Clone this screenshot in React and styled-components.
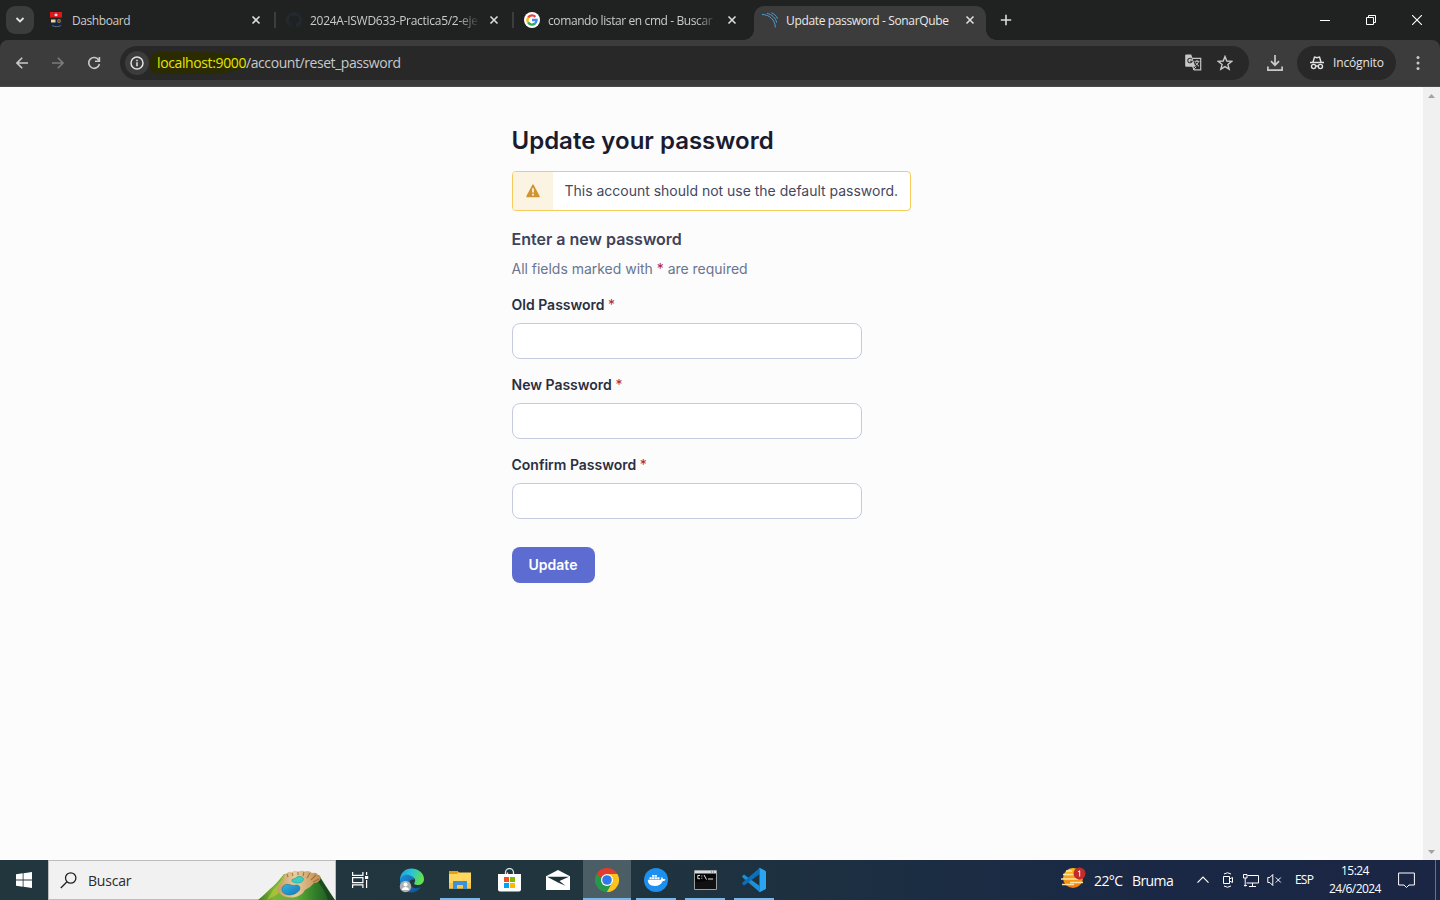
import React from 'react';
import styled, { createGlobalStyle } from 'styled-components';

const Global = createGlobalStyle`
  *, *::before, *::after { box-sizing: border-box; }
  body { margin: 0; overflow: hidden; background: #fcfcfd; }
  svg { display: block; flex: none; }
`;

const ui = `'Segoe UI', 'Open Sans', 'Noto Sans', sans-serif`;

const Screen = styled.div`
  width: 1440px;
  height: 900px;
  display: flex;
  flex-direction: column;
  overflow: hidden;
  font-family: ${ui};
`;

/* ---------- browser chrome ---------- */
const TabStrip = styled.div`
  height: 40px;
  flex: none;
  display: flex;
  background: #1f2221;
  padding-left: 6px;
`;
const TabSearch = styled.div`
  width: 28px;
  height: 28px;
  margin: 6px 6px 0 0;
  border-radius: 9px;
  background: #3b3c3c;
  display: grid;
  place-items: center;
`;
const Tab = styled.div`
  position: relative;
  width: 232px;
  height: 34px;
  margin: 6px 6px 0 0;
  padding: 0 8px 6px;
  display: flex;
  align-items: center;
  gap: 8px;
  color: ${(p) => (p.$active ? '#e9e9e9' : '#c9cbca')};
  background: ${(p) => (p.$active ? '#3c3c3c' : 'transparent')};
  border-radius: 10px 10px 0 0;
  &::before, &::after {
    content: '';
    display: ${(p) => (p.$active ? 'block' : 'none')};
    position: absolute;
    bottom: 0;
    width: 10px;
    height: 10px;
  }
  &::before { left: -10px; background: radial-gradient(circle at 0 0, transparent 9.5px, #3c3c3c 10px); }
  &::after { right: -10px; background: radial-gradient(circle at 100% 0, transparent 9.5px, #3c3c3c 10px); }
`;
const TabTitle = styled.div`
  width: 168px;
  flex: none;
  height: 20px;
  margin-top: 2px;
  line-height: 20px;
  font-size: 12px;
  letter-spacing: ${(p) => p.$track || 0}px;
  white-space: nowrap;
  overflow: hidden;
  mask-image: ${(p) => (p.$fade ? 'linear-gradient(90deg, #000 148px, transparent 170px)' : 'none')};
`;
const TabClose = styled.div`
  width: 16px;
  height: 16px;
  display: grid;
  place-items: center;
`;
const TabDivider = styled.span`
  position: absolute;
  right: -4px;
  top: 6px;
  width: 2px;
  height: 16px;
  background: #3c3d3d;
`;
const NewTab = styled.div`
  width: 28px;
  height: 28px;
  margin: 6px 0 0;
  display: grid;
  place-items: center;
`;
const WindowButtons = styled.div`
  margin-left: auto;
  display: flex;
`;
const WindowButton = styled.div`
  width: 46px;
  height: 40px;
  display: grid;
  place-items: center;
`;
const ToolbarBack = styled.div`
  flex: none;
  background: #1f2221;
`;
const Toolbar = styled.div`
  height: 47px;
  display: flex;
  align-items: center;
  padding: 0 0 1px 4px;
  background: #3c3c3c;
  border-bottom: 1px solid #4a4a4a;
  border-radius: 8px 8px 0 0;
`;
const ToolButton = styled.div`
  width: ${(p) => p.$w || 36}px;
  height: 34px;
  display: grid;
  place-items: center;
`;
const AddressBar = styled.div`
  width: 1129px;
  height: 34px;
  margin: 0 4px 0 8px;
  padding: 0 8px 0 5px;
  display: flex;
  align-items: center;
  background: #282828;
  border-radius: 17px;
`;
const SiteInfo = styled.div`
  width: 24px;
  height: 24px;
  border-radius: 12px;
  background: #3c3c3c;
  display: grid;
  place-items: center;
`;
const Url = styled.div`
  display: flex;
  align-items: center;
  margin-right: auto;
  font-size: 14px;
  line-height: 22px;
  letter-spacing: -0.43px;
  color: #c7c9cc;
`;
const Marked = styled.span`
  padding-left: 7px;
  margin-left: 1px;
  letter-spacing: -0.38px;
  color: #e4e400;
  background: #2b2b02;
  border-radius: 10px 50% 40% 10px / 7px 10px 10px 7px;
`;
const Incognito = styled.div`
  width: 99px;
  height: 34px;
  padding-left: 12px;
  display: flex;
  align-items: center;
  gap: 8px;
  border-radius: 17px;
  background: #282828;
  color: #e3e3e3;
  font-size: 12px;
  letter-spacing: -0.15px;
`;

/* ---------- page ---------- */
const Viewport = styled.main`
  flex: 1;
  display: flex;
  background: #fcfcfd;
  font-family: Inter, sans-serif;
`;
const Page = styled.div`
  width: 1423px;
  padding: 38px 0 0 512px;
  display: flex;
  flex-direction: column;
  align-items: flex-start;
`;
const Title = styled.h1`
  margin: 0 0 0 -0.5px;
  font-size: 24px;
  line-height: 32px;
  font-weight: 600;
  color: #1a1b2e;
`;
const Banner = styled.div`
  width: 399px;
  height: 40px;
  margin-top: 14px;
  display: flex;
  border: 1px solid #f6ca5c;
  border-radius: 4px;
  background: #fff;
  overflow: hidden;
`;
const BannerIcon = styled.div`
  width: 40px;
  display: grid;
  place-items: center;
  background: #fcf4e2;
`;
const BannerText = styled.div`
  padding-left: 11.5px;
  font-size: 14px;
  line-height: 38px;
  letter-spacing: -0.01px;
  white-space: nowrap;
  color: #45475f;
`;
const Subtitle = styled.h2`
  margin: 16px 0 0 -0.5px;
  font-size: 16px;
  line-height: 24px;
  font-weight: 600;
  color: #3e4357;
`;
const Note = styled.p`
  margin: 8px 0 0 -0.5px;
  font-size: 14px;
  line-height: 20px;
  letter-spacing: -0.02px;
  color: #6a7590;
`;
const Star = styled.span`
  font-weight: 400;
  color: #b4233c;
`;
const Field = styled.label`
  margin-top: 16px;
  display: flex;
  flex-direction: column;
  gap: 8px;
  font-size: 14px;
  line-height: 20px;
  font-weight: 600;
  color: #2a2f40;
`;
const LabelText = styled.span`
  margin-left: -0.5px;
`;
const Input = styled.input`
  width: 350px;
  height: 36px;
  padding: 0 12px;
  border: 1px solid #c5cae0;
  border-radius: 8px;
  background: #fff;
  outline: none;
`;
const Submit = styled.button`
  width: 83px;
  height: 36px;
  margin-top: 28px;
  padding: 0 1px 0 0;
  border: 0;
  border-radius: 8px;
  background: #5d6cd0;
  color: #fff;
  font: 600 14px/20px Inter, sans-serif;
`;
const Scrollbar = styled.div`
  width: 17px;
  padding: 7px 0 6px;
  display: flex;
  flex-direction: column;
  justify-content: space-between;
  align-items: center;
  background: #f0f0f0;
`;

/* ---------- taskbar ---------- */
const Taskbar = styled.footer`
  height: 40px;
  flex: none;
  display: flex;
  color: #fff;
  background: linear-gradient(90deg, #21363d 0%, #20353e 40%, #1c2e42 62%, #1a2845 80%, #1a2644 100%);
`;
const TaskItem = styled.div`
  width: ${(p) => p.$w || 49}px;
  height: 40px;
  margin-right: ${(p) => p.$gap || 0}px;
  display: grid;
  place-items: center;
  background: ${(p) => (p.$active ? 'linear-gradient(90deg, #4b5d65 48px, transparent 48px)' : 'none')};
  padding-right: ${(p) => (p.$w ? 0 : 1)}px;
  grid-template-rows: 38px 2px;
  &::after {
    content: '';
    width: ${(p) => (p.$active ? 48 : 40)}px;
    height: 2px;
    background: ${(p) => (p.$open ? '#76b9ed' : 'transparent')};
  }
  svg { margin-top: 2px; }
`;
const Search = styled.div`
  width: 288px;
  height: 40px;
  padding-left: 11px;
  display: flex;
  align-items: center;
  background: #f1f1f1;
  border: 1px solid #bcbcbc;
  color: #2b2b2b;
  font-size: 14px;
  letter-spacing: -0.2px;
  span { margin: 0 auto 0 11px; }
`;
const Weather = styled.div`
  margin-left: auto;
  display: flex;
  align-items: center;
  font-size: 14px;
  svg { margin-top: -4px; }
`;
const WeatherText = styled.span`
  width: ${(p) => p.$w}px;
  margin-left: 8px;
  letter-spacing: -0.6px;
  white-space: nowrap;
`;
const Tray = styled.div`
  display: flex;
  align-items: center;
  margin-left: 24px;
  width: 243px;
  font-size: 12px;
`;
const Lang = styled.span`
  margin: -1px 0 0 12px;
  width: 20px;
  letter-spacing: -0.8px;
`;
const Clock = styled.div`
  width: 60px;
  margin-left: 10px;
  text-align: center;
  line-height: 18px;
  letter-spacing: -0.55px;
  white-space: nowrap;
  padding-bottom: 1px;
`;
const Peek = styled.div`
  width: 5px;
  height: 40px;
  margin-left: auto;
  border-left: 1px solid #66718a;
`;

/* ---------- icons ---------- */
const Line = ({ w, h = w, d, c = '#dcdcdc', s = 1.6, children }) => (
  <svg width={w} height={h} viewBox={`0 0 ${w} ${h}`} fill="none" stroke={c} strokeWidth={s}>
    {d && <path d={d} />}
    {children}
  </svg>
);
const TrayIcon = styled.svg`
  margin-left: ${(p) => p.$gap}px;
  fill: none;
  stroke: #fff;
`;
const Close = () => <Line w={10} d="M1.500 1.500l7 7M8.500 1.500l-7 7" s={1.600} />;

const Crest = () => (
  <svg width="16" height="16" viewBox="0 0 16 16">
    <path d="M3 7h11v5c0 3-3 4-5.500 4S3 15 3 12z" fill="#10264b" />
    <path d="M2 0h12v5.500H2z" fill="#df171d" />
    <path d="M8 1.300l2 1.600-2 1.700-2-1.700z" fill="#b8e4f2" />
    <path d="M3 7.500h4.500v3H3z" fill="#f0d694" />
    <circle cx="11" cy="9" r="1.900" fill="#b87937" /><circle cx="11" cy="9" r=".8" fill="#10264b" />
    <path d="M4 13.500c2 1.500 7 1.500 9 0" stroke="#5c6c64" fill="none" />
  </svg>
);
const GitHub = () => (
  <svg width="16" height="16" viewBox="0 0 16 16">
    <path fill="#24292f" d="M8 0C3.580 0 0 3.580 0 8c0 3.540 2.290 6.530 5.470 7.590.4.070.55-.17.55-.38v-1.490c-2.010.37-2.530-.49-2.690-.94-.09-.23-.48-.94-.82-1.130-.28-.15-.68-.52-.01-.53.63-.01 1.080.58 1.230.82.72 1.210 1.870.87 2.330.66.07-.52.28-.87.51-1.070-1.780-.2-3.640-.89-3.640-3.950 0-.87.31-1.590.82-2.150-.08-.2-.36-1.020.08-2.120 0 0 .67-.21 2.200.82a7.600 7.600 0 014 0c1.530-1.040 2.200-.82 2.200-.82.44 1.100.16 1.920.08 2.120.51.56.82 1.270.82 2.150 0 3.070-1.870 3.750-3.650 3.950.29.25.54.73.54 1.480v2.200c0 .21.15.46.55.38A8 8 0 0016 8c0-4.420-3.580-8-8-8z" />
  </svg>
);
const Google = () => (
  <svg width="16" height="16" viewBox="0 0 16 16">
    <circle cx="8" cy="8" r="8" fill="#fff" />
    <g fill="none" strokeWidth="2.300">
      <path d="M4.200 5.500A4.600 4.600 0 0111.400 4.900" stroke="#ea4335" />
      <path d="M4.200 10.500a4.600 4.600 0 010-5" stroke="#fbbc05" />
      <path d="M11 11.500a4.600 4.600 0 01-6.800-1" stroke="#34a853" />
      <path d="M8 8h4.600c0 1.600-.6 2.700-1.600 3.500" stroke="#4285f4" />
    </g>
  </svg>
);
const Sonar = () => (
  <Line w={16} c="#4b9fd5" s={1}>
    <path d="M0 2.500C7.500 2.500 13.300 8 13.300 15.500" />
    <path d="M5 1.300C10 2.500 13.600 6 14.700 10.600" />
    <path d="M9.500.8C12.400 2 14.500 4 15.600 6.800" />
  </Line>
);
const Translate = () => (
  <svg width="17" height="17" viewBox="0 0 17 17">
    <path d="M7 4.300h8.700v11.600H9.200L7.500 12" fill="none" stroke="#c4c4c4" strokeWidth="1.200" />
    <path d="M1.200.5h5l4.300 12.300H1.200Q.2 12.800.2 11.800V1.500Q.2.500 1.200.5z" fill="#c7c7c7" />
    <path d="M7 5.300A2.300 2.300 0 107.200 7.300H5" fill="none" stroke="#333" strokeWidth="1.100" />
    <path d="M9.500 7.300h5M12 6v1.300M13.500 7.500c-.5 2-1.800 3.200-3 4M10.500 8.500c.8 1.500 2 2.700 3.500 3.700M8.200 16l3-3.200" fill="none" stroke="#c4c4c4" />
  </svg>
);
const IncognitoIcon = () => (
  <Line w={16} c="#e3e3e3" s={1.400}>
    <path d="M1 7.500h14M4 7l1.500-5 2.500.7 2.500-.7L12 7" />
    <circle cx="4.600" cy="11.500" r="2.100" /><circle cx="11.400" cy="11.500" r="2.100" /><path d="M6.700 11h2.600" />
  </Line>
);
const Warning = () => (
  <svg width="14" height="14" viewBox="0 0 14 14">
    <path d="M6.400.8q.6-1 1.200 0l6 11.300q.4 1.100-.6 1.100H1q-1 0-.6-1.100z" fill="#d3932f" />
    <path d="M6.200 4.300h1.600v4.200H6.200zM6.200 9.800h1.600v1.600H6.200z" fill="#fff" />
  </svg>
);
const Windows = () => (
  <svg width="16" height="16" viewBox="0 0 16 16" fill="#fff">
    <path d="M0 2.200l6.700-.9v6.300H0zM7.500 1.200L16 0v7.600H7.500zM0 8.400h6.700v6.300L0 13.800zM7.500 8.400H16V16l-8.500-1.200z" />
  </svg>
);
const HillBox = styled.svg`
  align-self: flex-end;
  margin-bottom: -1px;
`;
const Hill = () => (
  <HillBox width="77" height="30" viewBox="0 0 77 30">
    <defs>
      <linearGradient id="grass" x1="0" x2="1"><stop offset="0" stopColor="#3f7d22" /><stop offset=".2" stopColor="#7cb437" /><stop offset=".5" stopColor="#5fae33" /><stop offset=".75" stopColor="#2f7d2a" /><stop offset="1" stopColor="#1d4c20" /></linearGradient>
      <linearGradient id="pool" x1="0" y1="0" x2="1" y2="1"><stop offset="0" stopColor="#35b4dd" /><stop offset="1" stopColor="#1279b8" /></linearGradient>
      <linearGradient id="sand" x1="0" x2="1"><stop offset="0" stopColor="#c79c62" /><stop offset=".4" stopColor="#e6cda0" /><stop offset="1" stopColor="#c08c4e" /></linearGradient>
    </defs>
    <path d="M0 30Q6 25 12 19C18 14 22 9 26 4L61 5Q67 15 77 30z" fill="url(#grass)" />
    <path d="M15 20Q22 13 25 6L28 4 20 24 9 30z" fill="#c3cb3c" opacity=".6" />
    <path d="M62 8L76 30H70Q66 18 60 12z" fill="#173f1c" opacity=".7" />
    <path d="M26 8Q25 4 29 3 31 1 34 2 37 0 40 1.500 44 0 47 1.500 51 0 54 3 59 2 60 5 64 6 62 10 60 13 56 13 52 18 47 20 44 26 35 27.500 25 28 20 22 19 16 23 13z" fill="url(#sand)" />
    <path d="M29 4l1 3M34 3l1 3M40 2v3M46 2l-1 4M52 3l-3 5M58 5l-5 5M61 9l-6 3" stroke="#96622e" strokeWidth="1.100" fill="none" opacity=".75" />
    <path d="M24 18Q26 13.500 31 14.500 35 16 39 15 43 16 41.500 20 38 25 31 25 23 24 24 18z" fill="url(#pool)" stroke="#0f6b9f" strokeWidth=".5" />
    <path d="M34 9.500Q37 9 40 6.500 45 6 45.500 9.500 44 13.500 38 13 33 12.500 34 9.500z" fill="#38d0c4" stroke="#1c9b95" strokeWidth=".6" />
  </HillBox>
);
const TaskView = () => (
  <Line w={17} h={16} c="#fff" s={1.200}>
    <path d="M.6 0v3.400h10.300V0M.6 5.600h10.300v5H.6zM.6 16v-3.200h10.300V16M14.600 0v3M14.600 8v8" />
    <path d="M13 4h3.200v3H13z" fill="#fff" stroke="none" />
  </Line>
);
const Edge = () => (
  <svg width="25" height="25" viewBox="0 0 25 25">
    <defs>
      <linearGradient id="e1" x1="0" x2="1" y2=".3"><stop offset="0" stopColor="#1c9de0" /><stop offset=".5" stopColor="#28c3d9" /><stop offset="1" stopColor="#63e04d" /></linearGradient>
      <linearGradient id="e2" x1="0" x2="1" y2="1"><stop offset="0" stopColor="#1c91d8" /><stop offset="1" stopColor="#114b92" /></linearGradient>
    </defs>
    <path d="M1 12C1 5 6 .5 12.500.5S25 5 25 11c0 4-3 6-6.500 6-3 0-4-1.200-3-2.500 1.500-2 .5-5-3-5.500z" fill="url(#e1)" />
    <path d="M1 13C1 8 6 6 10 7c3 .8 5 2.500 5 5-4-2-5 2-3.500 5 1.800 3.500 6.500 4 10.500 2-2 3.500-5.500 5.500-9.500 5.500C5 24.500 1 19 1 13z" fill="url(#e2)" />
    <circle cx="6.500" cy="18.500" r="5.700" fill="#aeb2b4" />
    <circle cx="6.500" cy="16.500" r="2" fill="#fff" /><path d="M3 22c0-4 7-4 7 0z" fill="#fff" />
  </svg>
);
const Folder = () => (
  <svg width="22" height="18" viewBox="0 0 22 18">
    <path d="M0 0h8.500l1.500 1.500h12V17.500H0z" fill="#ffd75e" />
    <path d="M0 0h8.500l1 1.500L8 3H0z" fill="#e59f12" />
    <path d="M0 12h22v5.500H0z" fill="#f8c64a" />
    <path d="M4 18v-8h14v8h-4v-4H8v4z" fill="#3c91d8" />
  </svg>
);
const Store = () => (
  <svg width="23" height="24" viewBox="0 0 23 24">
    <path d="M7.500 7V4.500a4 4 0 018 0V7M9.500 7V4.500" fill="none" stroke="#dce4e6" strokeWidth="1.300" />
    <path d="M0 6h23v15.500q0 2-2 2H2q-2 0-2-2z" fill="#fff" />
    <path d="M6 9h5v5H6z" fill="#f25022" /><path d="M12 9h5v5h-5z" fill="#7fba00" />
    <path d="M6 15h5v5H6z" fill="#00a4ef" /><path d="M12 15h5v5h-5z" fill="#ffb900" />
  </svg>
);
const Mail = () => (
  <svg width="24" height="20" viewBox="0 0 24 20">
    <path d="M0 6.300L12 0l12 6.300V20H0z" fill="#fff" />
    <path d="M1 6.800h22L13.500 11l6 4.800L12 12.500z" fill="#1e3139" />
  </svg>
);
const Chrome = () => (
  <svg width="24" height="24" viewBox="0 0 24 24">
    <path d="M12 12L1.600 6A12 12 0 0122.400 6z" fill="#e33b2e" />
    <path d="M12 12L22.400 6A12 12 0 0112 24z" fill="#fcc31e" />
    <path d="M12 12v12A12 12 0 011.600 6z" fill="#279847" />
    <path d="M12 6h10.400L17.200 15z" fill="#fcc31e" /><path d="M1.600 6l5.200 9 3-6z" fill="#279847" />
    <path d="M1.600 6h20.800H12l-5 4z" fill="#e33b2e" /><path d="M17.200 15L12 24l-5.200-9z" fill="#279847" />
    <path d="M17.200 15L12 24l3-.4 5-3.600 2.500-7z" fill="#fcc31e" />
    <circle cx="12" cy="12" r="6" fill="#fff" /><circle cx="12" cy="12" r="4.800" fill="#3079ec" />
  </svg>
);
const Docker = () => (
  <svg width="24" height="24" viewBox="0 0 24 24">
    <circle cx="12" cy="12" r="12" fill="#1d8fee" />
    <path d="M3.800 11.800h13c.6-.9.300-2 .9-2.700 1 .6 1.200 1.300 1.200 1.900 1 0 1.800 0 2.600.5-.5 1-1.400 1.500-2.700 1.500-1.500 3.500-4.200 5-8 5-4.700 0-7-2.500-7-6.200z" fill="#fff" />
    <path d="M5.500 9.200h2.200v2H5.500zM8.100 9.200h2.200v2H8.100zM10.700 9.200h2.200v2h-2.200zM13.300 9.200h2.200v2h-2.200zM8.100 6.900h2.200v1.900H8.100zM10.700 6.900h2.200v1.900h-2.200z" fill="#fff" />
  </svg>
);
const TerminalIcon = () => (
  <svg width="23" height="20" viewBox="0 0 23 20">
    <path d="M.5.500h22v19H.5z" fill="#050505" stroke="#9a9fa2" />
    <path d="M1 1h21v2.500H1z" fill="#d9dcde" /><path d="M17 1.500h1v1h-1zM19 1.500h1v1h-1z" fill="#58656c" />
    <path d="M6 5.500H3.800v3.200H6M7.800 5.500v1M7.800 7.800v.9M10 5l2.500 4.500M14 9h5" stroke="#e3e3e3" fill="none" />
    <path d="M1 12q12 0 21-5v12H1z" fill="#fff" opacity=".05" />
  </svg>
);
const VsCode = () => (
  <svg width="24" height="24" viewBox="0 0 24 24">
    <path d="M17.500 17.800L2 6.500.3 8v1.300L17.500 24z" fill="#1f8fd8" />
    <path d="M17.500 6.200L2 17.500.3 16v-1.300L17.500 0z" fill="#0c6fb8" />
    <path d="M17 0q.5-.2 1 0l5 2.400q1 .5 1 1.500v16.200q0 1-1 1.500L18 24q-.7.200-1.300-.4.800.2.800-1V1.400q0-1.200-.8-1z" fill="#2aa5f2" />
  </svg>
);
const Haze = () => (
  <svg width="25" height="22" viewBox="0 0 25 22">
    <defs><linearGradient id="sun" x1="0" y1="0" x2="0" y2="1"><stop offset="0" stopColor="#ffc21a" /><stop offset="1" stopColor="#ee7a12" /></linearGradient></defs>
    <circle cx="12" cy="11" r="10" fill="url(#sun)" />
    <path d="M2 7.500h14M5 4h6M0 12h17M9 15.500h13M1 17.500h12" stroke="#ffe3a6" strokeWidth="1.400" />
    <circle cx="18.500" cy="6.500" r="6" fill="#c42b2b" />
    <path d="M17 5l1.700-1.300V9.500" fill="none" stroke="#fff" strokeWidth="1" />
  </svg>
);

const tabs = [
  { title: 'Dashboard', icon: <Crest />, track: -0.42 },
  { title: '2024A-ISWD633-Practica5/2-eje', icon: <GitHub />, fade: true, track: -0.28 },
  { title: 'comando listar en cmd - Buscar', icon: <Google />, fade: true, track: -0.4 },
  { title: 'Update password - SonarQube', icon: <Sonar />, active: true, track: -0.35 },
];

export default function App() {
  return (
    <Screen>
      <Global />
      <TabStrip>
        <TabSearch><Line w={10} h={8} d="M1.500 2l3.500 3.500L8.500 2" s={1.800} c="#e3e3e3" /></TabSearch>
        {tabs.map((t, i) => (
          <Tab key={t.title} $active={t.active}>
            {t.icon}
            <TabTitle $fade={t.fade} $track={t.track}>{t.title}</TabTitle>
            <TabClose><Close /></TabClose>
            {i < 2 && <TabDivider />}
          </Tab>
        ))}
        <NewTab><Line w={12} d="M6 .8v10.400M.8 6h10.400" s={1.600} /></NewTab>
        <WindowButtons>
          <WindowButton><Line w={10} d="M0 5.500h10" c="#fff" s={1} /></WindowButton>
          <WindowButton><Line w={10} d="M.5 2.500h7v7h-7zM2.500 2.500v-2h7v7h-2" c="#fff" s={1} /></WindowButton>
          <WindowButton><Line w={10} d="M0 0l10 10M10 0L0 10" c="#fff" s={1.100} /></WindowButton>
        </WindowButtons>
      </TabStrip>
      <ToolbarBack>
        <Toolbar>
          <ToolButton><Line w={12} d="M12 6H1M6.200.8L1 6l5.200 5.200" c="#c9c9c9" s={1.600} /></ToolButton>
          <ToolButton><Line w={12} d="M0 6h11M5.800.8L11 6l-5.200 5.200" c="#7b7b7b" s={1.600} /></ToolButton>
          <ToolButton><Line w={14} d="M11.800 4.200A5.400 5.400 0 1012.400 8M12.400 1v4.300H8" c="#c9c9c9" s={1.600} /></ToolButton>
          <AddressBar>
            <SiteInfo>
              <Line w={14} c="#e3e3e3" s={1.500}><circle cx="7" cy="7" r="6" /><path d="M7 6.200v4M7 3.700v1.500" /></Line>
            </SiteInfo>
            <Url><Marked>localhost:9000</Marked>/account/reset_password</Url>
            <ToolButton $w={32}><Translate /></ToolButton>
            <ToolButton $w={32}><Line w={16} d="M8 1.500l1.800 4.500 4.900.3-3.800 3.100 1.300 4.800L8 11.600l-4.200 2.600 1.300-4.800L1.300 6.300 6.200 6z" c="#c9c9c9" s={1.400} /></ToolButton>
          </AddressBar>
          <ToolButton $w={44}><Line w={16} d="M8 0v10M4 6.200l4 4 4-4M.9 11.500v3.600h14.200v-3.600" c="#c9c9c9" s={1.700} /></ToolButton>
          <Incognito><IncognitoIcon />Incógnito</Incognito>
          <ToolButton $w={44}>
            <svg width="4" height="16" viewBox="0 0 4 16" fill="#c9c9c9"><circle cx="2" cy="2.500" r="1.500" /><circle cx="2" cy="8" r="1.500" /><circle cx="2" cy="13.500" r="1.500" /></svg>
          </ToolButton>
        </Toolbar>
      </ToolbarBack>

      <Viewport>
        <Page>
          <Title>Update your password</Title>
          <Banner>
            <BannerIcon><Warning /></BannerIcon>
            <BannerText>This account should not use the default password.</BannerText>
          </Banner>
          <Subtitle>Enter a new password</Subtitle>
          <Note>All fields marked with <Star>*</Star> are required</Note>
          {['Old Password', 'New Password', 'Confirm Password'].map((label) => (
            <Field key={label}>
              <LabelText>{label} <Star>*</Star></LabelText>
              <Input type="password" />
            </Field>
          ))}
          <Submit type="button">Update</Submit>
        </Page>
        <Scrollbar>
          <svg width="7" height="4" viewBox="0 0 7 4"><path d="M0 4l3.500-4L7 4z" fill="#a3a3a3" /></svg>
          <svg width="7" height="4" viewBox="0 0 7 4"><path d="M0 0l3.500 4L7 0z" fill="#a3a3a3" /></svg>
        </Scrollbar>
      </Viewport>

      <Taskbar>
        <TaskItem $w={48}><Windows /></TaskItem>
        <Search>
          <Line w={17} h={17} c="#222" s={1.300}><circle cx="10.700" cy="6" r="5.200" /><path d="M7 9.700L.8 16" /></Line>
          <span>Buscar</span>
          <Hill />
        </Search>
        <TaskItem $w={48} $gap={3}><TaskView /></TaskItem>
        <TaskItem><Edge /></TaskItem>
        <TaskItem $open><Folder /></TaskItem>
        <TaskItem><Store /></TaskItem>
        <TaskItem><Mail /></TaskItem>
        <TaskItem $open $active><Chrome /></TaskItem>
        <TaskItem $open><Docker /></TaskItem>
        <TaskItem $open><TerminalIcon /></TaskItem>
        <TaskItem $open><VsCode /></TaskItem>
        <Weather>
          <Haze />
          <WeatherText $w={30}>22°C</WeatherText>
          <WeatherText $w={41}>Bruma</WeatherText>
        </Weather>
        <Tray>
          <Line w={12} h={8} d="M.5 6.700L6 1.200l5.500 5.500" c="#fff" s={1.200} />
          <TrayIcon $gap={13} width="12" height="16" viewBox="0 0 12 16">
            <path d="M1.500 4.500h6v7h-6zM7.500 7l3-1.500v5l-3-1.500M2 2q3.500-2.500 7 0M2 14q3.500 2.500 7 0" />
          </TrayIcon>
          <TrayIcon $gap={9} width="17" height="15" viewBox="0 0 17 15">
            <path d="M4.500 2.500h11v7.500H3.500M9.500 10v3M6 13.500h7M.5 1.500h3.500v3.500H.5zM2.200 5v8.500M1 12.500h3" />
          </TrayIcon>
          <TrayIcon $gap={7} width="16" height="14" viewBox="0 0 16 14">
            <path d="M.8 4.500h2l3-3v11l-3-3h-2zM8.800 4.500l5 5M13.800 4.500l-5 5" />
          </TrayIcon>
          <Lang>ESP</Lang>
          <Clock>15:24<br />24/6/2024</Clock>
          <TrayIcon $gap={13} width="17" height="17" viewBox="0 0 17 17">
            <path d="M.6 1h15.800v12h-5.400l-2.500 2.500L6 13H.6z" />
          </TrayIcon>
          <Peek />
        </Tray>
      </Taskbar>
    </Screen>
  );
}
